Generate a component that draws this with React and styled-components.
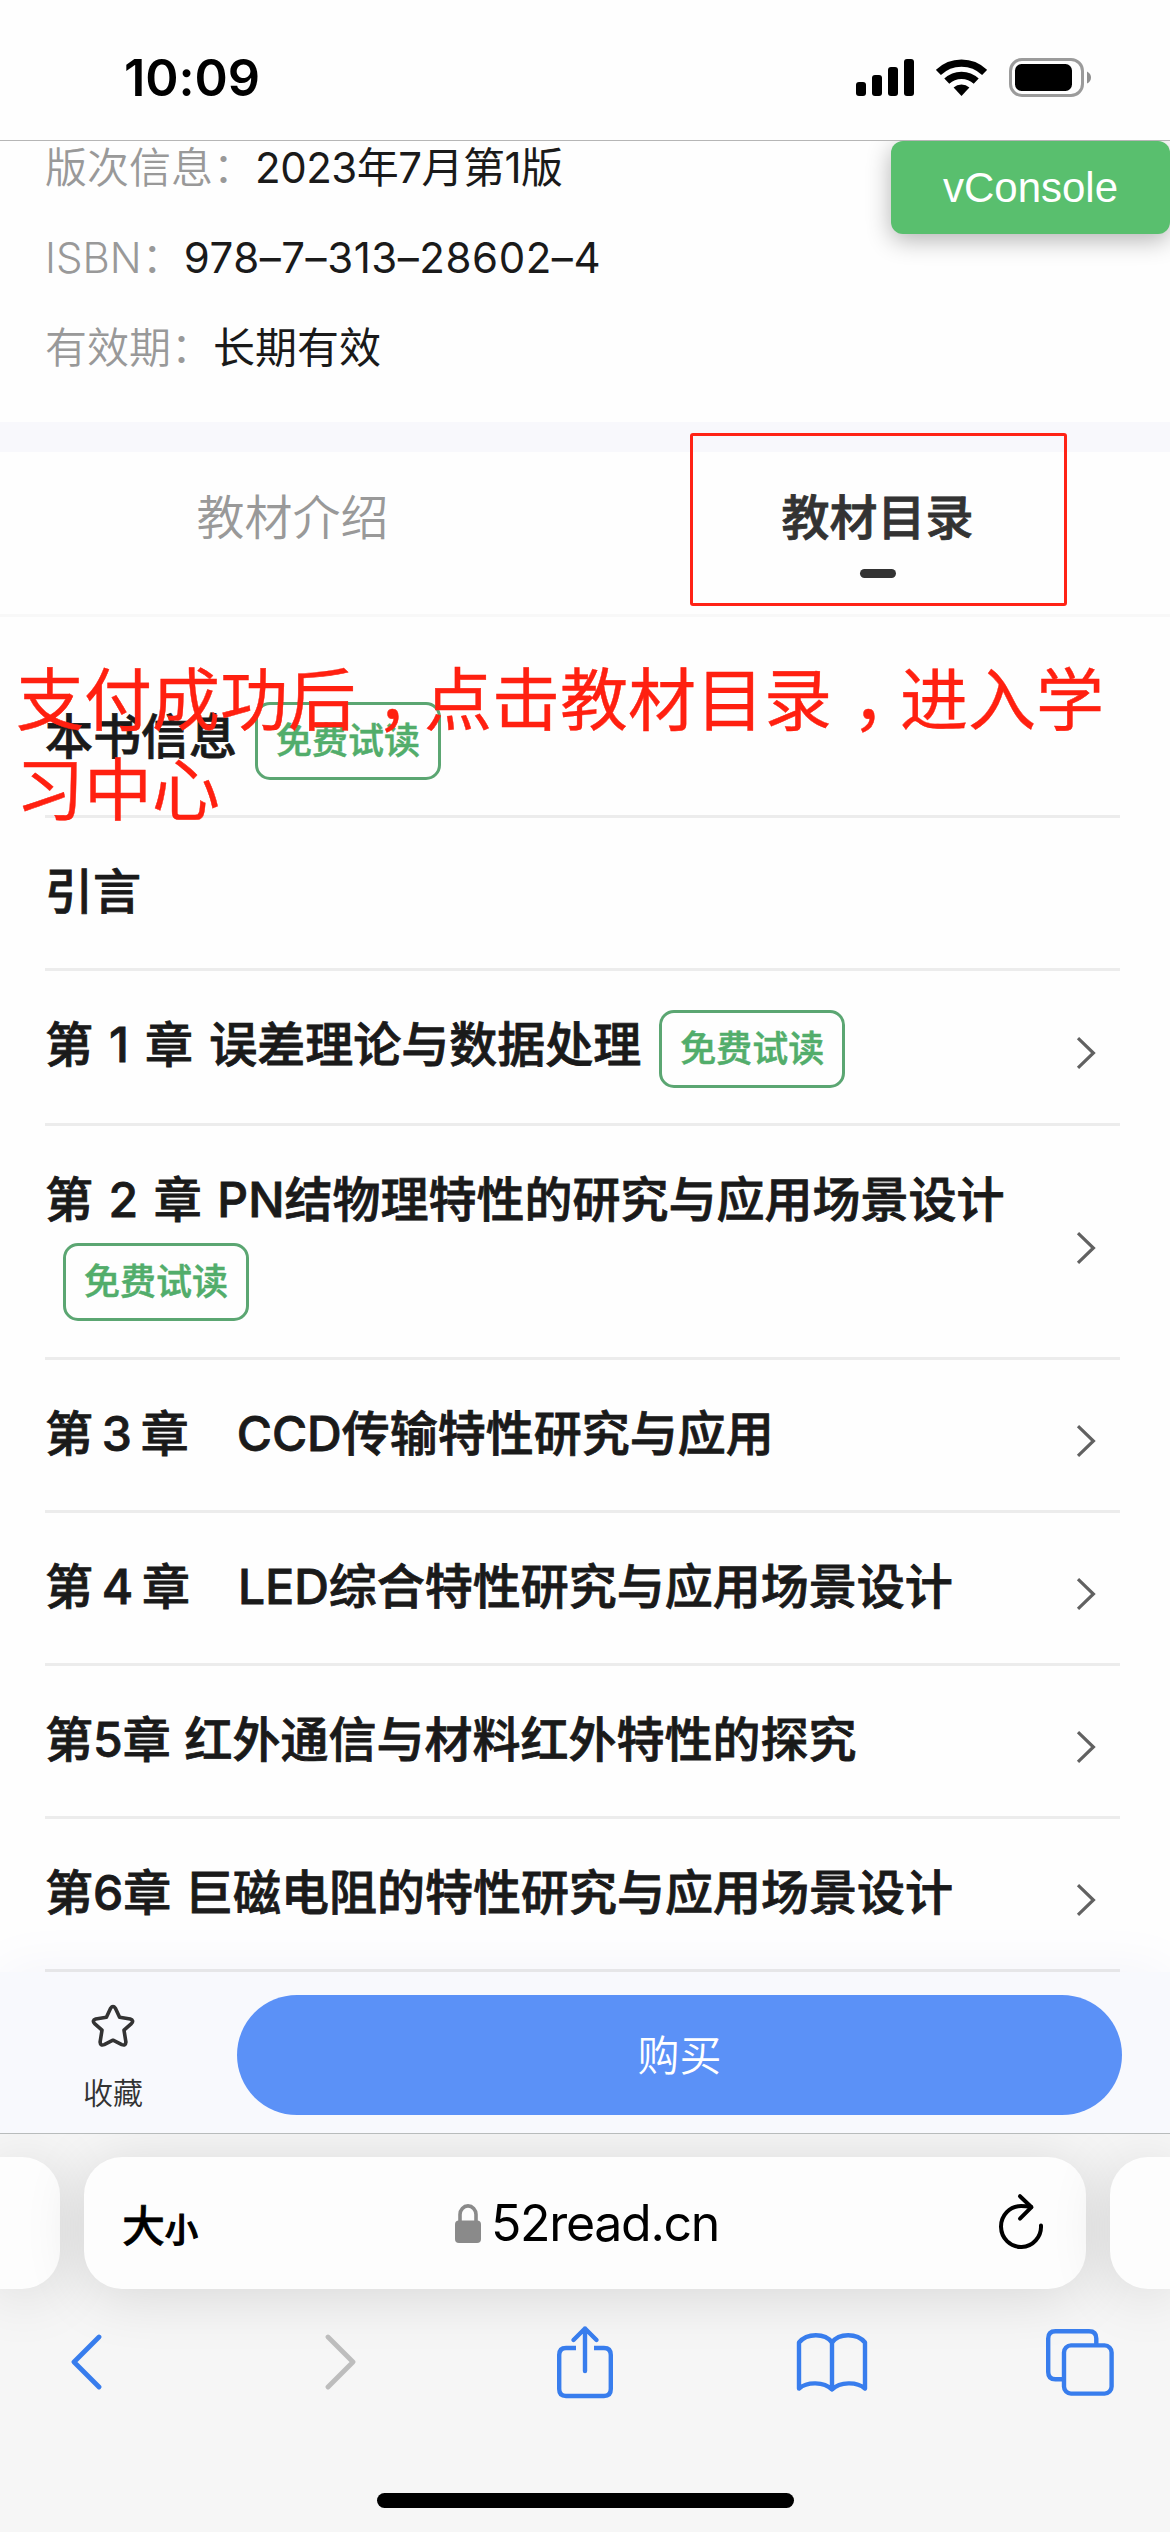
import React from "react";
import styled, { createGlobalStyle } from "styled-components";

const bookInfo = [
  { label: "版次信息：", value: "2023年7月第1版", spacing: "-0.5px" },
  { label: "ISBN：", value: "978–7–313–28602–4", spacing: "0.55px" },
  { label: "有效期：", value: "长期有效", spacing: "0" },
];

const chapters = [
  { title: "本书信息", free: true },
  { title: "引言" },
  { title: "第 1 章 误差理论与数据处理", free: true, arrow: true, wordSpacing: "3.3px" },
  {
    title: "第 2 章 PN结物理特性的研究与应用场景设计",
    free: true,
    arrow: true,
    wrapped: true,
    wordSpacing: "2.8px",
  },
  { title: "第 3 章　CCD传输特性研究与应用", arrow: true, wordSpacing: "-4px" },
  { title: "第 4 章　LED综合特性研究与应用场景设计", arrow: true, wordSpacing: "-4px" },
  { title: "第5章 红外通信与材料红外特性的探究", arrow: true, wordSpacing: "1px" },
  { title: "第6章 巨磁电阻的特性研究与应用场景设计", arrow: true, wordSpacing: "1px" },
];

const SignalIcon = () => (
  <svg width="58" height="37" viewBox="0 0 58 37" fill="#000">
    <rect x="0" y="23" width="10" height="14" rx="3" />
    <rect x="16" y="16" width="10" height="21" rx="3" />
    <rect x="32" y="8" width="10" height="29" rx="3" />
    <rect x="48" y="0" width="10" height="37" rx="3" />
  </svg>
);

const WifiIcon = () => (
  <svg width="51" height="37" viewBox="0 0 51 37" fill="none" stroke="#000" strokeWidth="7.2">
    <path d="M2.4 13.4 A33.2 33.2 0 0 1 48.6 13.4" />
    <path d="M10.8 22.2 A21.2 21.2 0 0 1 40.2 22.2" />
    <path d="M25.5 37 L17.6 28.6 A11.6 11.6 0 0 1 33.4 28.6 Z" fill="#000" stroke="none" />
  </svg>
);

const BatteryIcon = () => (
  <svg width="83" height="39" viewBox="0 0 83 39">
    <rect x="1.5" y="1.5" width="72" height="36" rx="11.5" fill="none" stroke="#9b9b9b" strokeWidth="3" />
    <rect x="6" y="6" width="57" height="27" rx="6.5" fill="#000" />
    <path d="M78 13.5 Q82 15.5 82 19.5 Q82 23.5 78 25.5 Z" fill="#8f8f8f" />
  </svg>
);

const ArrowIcon = () => (
  <svg width="20" height="34" viewBox="0 0 20 34" fill="none" stroke="#616161" strokeWidth="3.2">
    <path d="M2 2.2 L17.4 17 L2 31.8" />
  </svg>
);

const StarIcon = () => (
  <svg width="44" height="44" viewBox="0 0 44 44" fill="none" stroke="#333" strokeWidth="3.6" strokeLinejoin="round">
    <path d="M19.6 4.2 Q22 0.8 24.4 4.2 L28.6 13.3 L39.2 15 Q43.4 16.4 40.4 19.6 L33 26.2 L34.9 38 Q34.6 42 30.8 40.6 L22 36.2 L13.2 40.6 Q9.4 42 9.1 38 L11 26.2 L3.6 19.6 Q0.6 16.4 4.8 15 L15.4 13.3 Z" />
  </svg>
);

const LockIcon = () => (
  <svg width="26" height="39" viewBox="0 0 26 39">
    <path d="M5 18 V10.5 A8 8.6 0 0 1 21 10.5 V18" fill="none" stroke="#8a8a8a" strokeWidth="3.6" />
    <rect x="0" y="16.5" width="26" height="22.5" rx="4" fill="#8a8a8a" />
  </svg>
);

const ReloadIcon = () => (
  <svg width="48" height="56" viewBox="0 0 48 56" fill="none" stroke="#000" strokeWidth="4" strokeLinecap="round" strokeLinejoin="round">
    <path d="M44 32.5 A20 20.5 0 1 1 24 13 Q29 13 34 14" />
    <path d="M23 3.2 L34.5 14.2 L23 25.6" />
  </svg>
);

const BackIcon = () => (
  <svg width="32" height="56" viewBox="0 0 32 56" fill="none" stroke="#387ded" strokeWidth="4.8" strokeLinecap="round" strokeLinejoin="round">
    <path d="M29 3 L4 28 L29 53" />
  </svg>
);

const ForwardIcon = () => (
  <svg width="32" height="56" viewBox="0 0 32 56" fill="none" stroke="#bdbdbd" strokeWidth="4.8" strokeLinecap="round" strokeLinejoin="round">
    <path d="M3 3 L28 28 L3 53" />
  </svg>
);

const ShareIcon = () => (
  <svg width="58" height="74" viewBox="0 0 58 74" fill="none" stroke="#387ded" strokeWidth="4.4" strokeLinejoin="round">
    <path d="M20 23 H10 Q3.2 23 3.2 30 V64 Q3.2 71 10 71 H48 Q54.8 71 54.8 64 V30 Q54.8 23 48 23 H38" />
    <path d="M29 46 V3.5 M17.5 15 L29 3.5 L40.5 15" strokeLinecap="round" />
  </svg>
);

const BookIcon = () => (
  <svg width="72" height="62" viewBox="0 0 72 62" fill="none" stroke="#387ded" strokeWidth="4.4" strokeLinecap="round" strokeLinejoin="round">
    <path d="M36 11.5 C29 1.8 11 1.8 3 11.5 V57.5 C11 50.5 28 50.5 36 58.5 C44 50.5 61 50.5 69 57.5 V11.5 C61 1.8 43 1.8 36 11.5 Z" />
    <path d="M36 11.5 V58" />
  </svg>
);

const TabsIcon = () => (
  <svg width="68" height="67" viewBox="0 0 68 67" fill="none" stroke="#387ded" strokeWidth="4.4">
    <path d="M50.3 16 V9.5 Q50.3 2.2 43 2.2 H9.5 Q2.2 2.2 2.2 9.5 V43 Q2.2 50.3 9.5 50.3 H17" />
    <rect x="18" y="16.4" width="47.6" height="48.2" rx="7" />
  </svg>
);

const App = () => (
  <>
    <GlobalStyle />
    <Phone>
      <StatusBar>
        <Clock>10:09</Clock>
        <StatusIcons>
          <SignalIcon />
          <WifiIcon />
          <BatteryIcon />
        </StatusIcons>
      </StatusBar>

      <Content>
        <BookInfo>
          {bookInfo.map((item) => (
            <InfoRow key={item.label}>
              <InfoLabel>{item.label}</InfoLabel>
              <InfoValue $spacing={item.spacing}>{item.value}</InfoValue>
            </InfoRow>
          ))}
        </BookInfo>

        <Tabs>
          <Tab>教材介绍</Tab>
          <Tab $active>教材目录</Tab>
        </Tabs>

        <ChapterList>
          {chapters.map((chapter) => (
            <ChapterRow key={chapter.title} $wrapped={chapter.wrapped}>
              <ChapterTitle>
                <ChapterName $wordSpacing={chapter.wordSpacing}>{chapter.title}</ChapterName>
                {chapter.free && <FreeBadge>免费试读</FreeBadge>}
              </ChapterTitle>
              {chapter.arrow && <ArrowIcon />}
            </ChapterRow>
          ))}
        </ChapterList>

        <ConsoleButton>vConsole</ConsoleButton>
        <TabHighlight />
        <Note>
          支付成功后<Comma>，</Comma>点击教材目录<Comma>，</Comma>进入学
          <br />
          习中心
        </Note>
      </Content>

      <BuyBar>
        <Favorite>
          <StarIcon />
          收藏
        </Favorite>
        <BuyButton>购买</BuyButton>
      </BuyBar>

      <Browser>
        <AddressRow>
          <SideCard $left />
          <AddressBar>
            <TextSize>
              大<small>小</small>
            </TextSize>
            <Domain>
              <LockIcon />
              52read.cn
            </Domain>
            <ReloadIcon />
          </AddressBar>
          <SideCard />
        </AddressRow>
        <NavRow>
          <NavButton>
            <BackIcon />
          </NavButton>
          <NavButton $shift={12}>
            <ForwardIcon />
          </NavButton>
          <NavButton $shift={4}>
            <ShareIcon />
          </NavButton>
          <NavButton>
            <BookIcon />
          </NavButton>
          <NavButton>
            <TabsIcon />
          </NavButton>
        </NavRow>
        <HomeIndicator />
      </Browser>
    </Phone>
  </>
);

export default App;

const GlobalStyle = createGlobalStyle`
  * {
    box-sizing: border-box;
  }
  body {
    margin: 0;
    background: #fefefe;
  }
  svg {
    display: block;
    flex-shrink: 0;
  }
  button {
    border: 0;
    padding: 0;
    font-family: inherit;
  }
`;

const Phone = styled.div`
  display: flex;
  flex-direction: column;
  width: 1170px;
  height: 2532px;
  overflow: hidden;
  background: #fefefe;
  color: #1a1a1a;
  font-family: Inter, "Noto Sans CJK SC", sans-serif;
`;

const StatusBar = styled.header`
  display: flex;
  justify-content: space-between;
  flex-shrink: 0;
  height: 141px;
  padding: 58px 78px 0 124px;
  border-bottom: 1px solid #b6b6b6;
`;

const Clock = styled.div`
  color: #000;
  font-size: 50.5px;
  font-weight: 600;
  line-height: 40px;
  letter-spacing: -0.1px;
`;

const StatusIcons = styled.div`
  display: flex;
  align-items: center;
  gap: 22px;
  height: 39px;
`;

const Content = styled.main`
  position: relative;
  flex-shrink: 0;
  height: 1831px;
`;

const BookInfo = styled.section`
  margin-top: -18px;
  padding: 0 45px 29px;
`;

const InfoRow = styled.div`
  display: flex;
  height: 90px;
  font-size: 42px;
  line-height: 90px;
`;

const InfoLabel = styled.span`
  color: #999;
  font-weight: 350;
`;

const InfoValue = styled.span`
  letter-spacing: ${(props) => props.$spacing};
`;

const Tabs = styled.nav`
  display: flex;
  height: 195px;
  border-top: 30px solid #f8f8fc;
  border-bottom: 3px solid #f8f8f8;
`;

const Tab = styled.div`
  display: flex;
  flex: 1;
  flex-direction: column;
  align-items: center;
  padding-top: 36px;
  color: ${(props) => (props.$active ? "#333" : "#999")};
  font-size: 48px;
  font-weight: ${(props) => (props.$active ? 500 : 350)};
  line-height: 60px;
  -webkit-text-stroke: ${(props) => (props.$active ? "0.8px" : "0")};

  &::after {
    content: "";
    display: ${(props) => (props.$active ? "block" : "none")};
    width: 36px;
    height: 9px;
    margin-top: 21px;
    border-radius: 5px;
    background: #333;
  }
`;

const ChapterList = styled.section`
  padding: 46px 50px 0 45px;
`;

const ChapterRow = styled.div`
  display: flex;
  align-items: center;
  justify-content: space-between;
  min-height: ${(props) => (props.$wrapped ? 234 : 153)}px;
  border-bottom: 3px solid #ececec;

  > svg {
    margin: 12px 24px 0 0;
  }
`;

const ChapterTitle = styled.div`
  display: flex;
  flex: 1;
  flex-wrap: wrap;
  align-items: flex-start;
  align-self: flex-start;
  row-gap: 13px;
  padding: 39px 0 35px;
`;

const ChapterName = styled.div`
  margin-top: 5px;
  font-size: 48px;
  font-weight: 500;
  line-height: 60px;
  word-spacing: ${(props) => props.$wordSpacing || "0"};
  white-space: nowrap;
  -webkit-text-stroke: 0.8px;
`;

const FreeBadge = styled.div`
  width: 186px;
  height: 78px;
  margin-left: 18px;
  border: 3px solid #5ba672;
  border-radius: 15px;
  color: #52ad6b;
  font-size: 36px;
  font-weight: 500;
  line-height: 72px;
  text-align: center;
  -webkit-text-stroke: 0.5px;
`;

const ConsoleButton = styled.button`
  position: absolute;
  top: 0;
  right: 0;
  width: 279px;
  height: 93px;
  border-radius: 12px;
  background: #59bf6e;
  box-shadow: 0 6px 24px rgba(0, 0, 0, 0.3);
  clip-path: inset(0 0 -40px -40px);
  color: #fff;
  font-family: "Liberation Sans", sans-serif;
  font-size: 42px;
`;

const TabHighlight = styled.div`
  position: absolute;
  top: 292px;
  left: 690px;
  width: 377px;
  height: 173px;
  border: 3px solid #ff2316;
  border-radius: 3px;
`;

const Note = styled.div`
  position: absolute;
  top: 514px;
  left: 16px;
  color: #ff2010;
  font-size: 68px;
  line-height: 90px;
  white-space: nowrap;
  -webkit-text-stroke: 0.4px;
`;

const Comma = styled.span`
  margin: 0 -20px 0 20px;
`;

const BuyBar = styled.section`
  position: relative;
  display: flex;
  flex-shrink: 0;
  height: 161px;
  padding: 23px 48px 0 0;
  background: #f8f9fd;
  box-shadow: 0 0 60px #f3f3fa;

  &::before {
    content: "";
    position: absolute;
    top: -3px;
    right: 50px;
    left: 45px;
    height: 3px;
    background: #e6e6e8;
  }
`;

const Favorite = styled.div`
  display: flex;
  flex-direction: column;
  align-items: center;
  width: 189px;
  margin: 9px 24px 0;
  padding-right: 11px;
  color: #333;
  font-size: 30px;
  font-weight: 350;
  line-height: 40px;

  svg {
    margin-bottom: 25px;
  }
`;

const BuyButton = styled.button`
  flex: 1;
  height: 120px;
  padding-bottom: 5px;
  border-radius: 60px;
  background: #5b91f7;
  color: #fff;
  font-size: 42px;
  font-weight: 350;
`;

const Browser = styled.footer`
  position: relative;
  flex: 1;
  overflow: hidden;
  border-top: 1px solid #b8bcbc;
  background: #f6f6f6;
`;

const AddressRow = styled.div`
  display: grid;
  grid-template-columns: 60px 1002px 60px;
  gap: 24px;
  padding-top: 23px;
`;

const Card = styled.div`
  height: 132px;
  background: #fdfdfd;
  box-shadow: 0 6px 60px rgba(0, 0, 0, 0.13);
`;

const SideCard = styled(Card)`
  border-radius: ${(props) => (props.$left ? "0 38px 38px 0" : "38px 0 0 38px")};
`;

const AddressBar = styled(Card)`
  display: grid;
  grid-template-columns: 1fr auto 1fr;
  align-items: center;
  padding: 0 41px 0 38px;
  border-radius: 38px;
  color: #000;

  > svg {
    justify-self: end;
    margin-top: -5px;
  }
`;

const TextSize = styled.div`
  font-size: 43px;
  font-weight: 500;
  -webkit-text-stroke: 0.6px;

  small {
    font-size: 33px;
    -webkit-text-stroke: 1.2px;
  }
`;

const Domain = styled.div`
  display: flex;
  align-items: center;
  gap: 10px;
  padding-left: 7px;
  font-size: 50px;
  line-height: 60px;
  letter-spacing: -1.3px;
`;

const NavRow = styled.nav`
  display: flex;
  justify-content: space-between;
  height: 74px;
  margin-top: 36px;
  padding: 0 30px 0 26px;
`;

const NavButton = styled.div`
  display: flex;
  align-items: center;
  justify-content: center;
  width: 120px;
  padding-left: ${(props) => props.$shift || 0}px;
`;

const HomeIndicator = styled.div`
  width: 417px;
  height: 15px;
  margin: 94px auto 0;
  border-radius: 8px;
  background: #000;
`;
